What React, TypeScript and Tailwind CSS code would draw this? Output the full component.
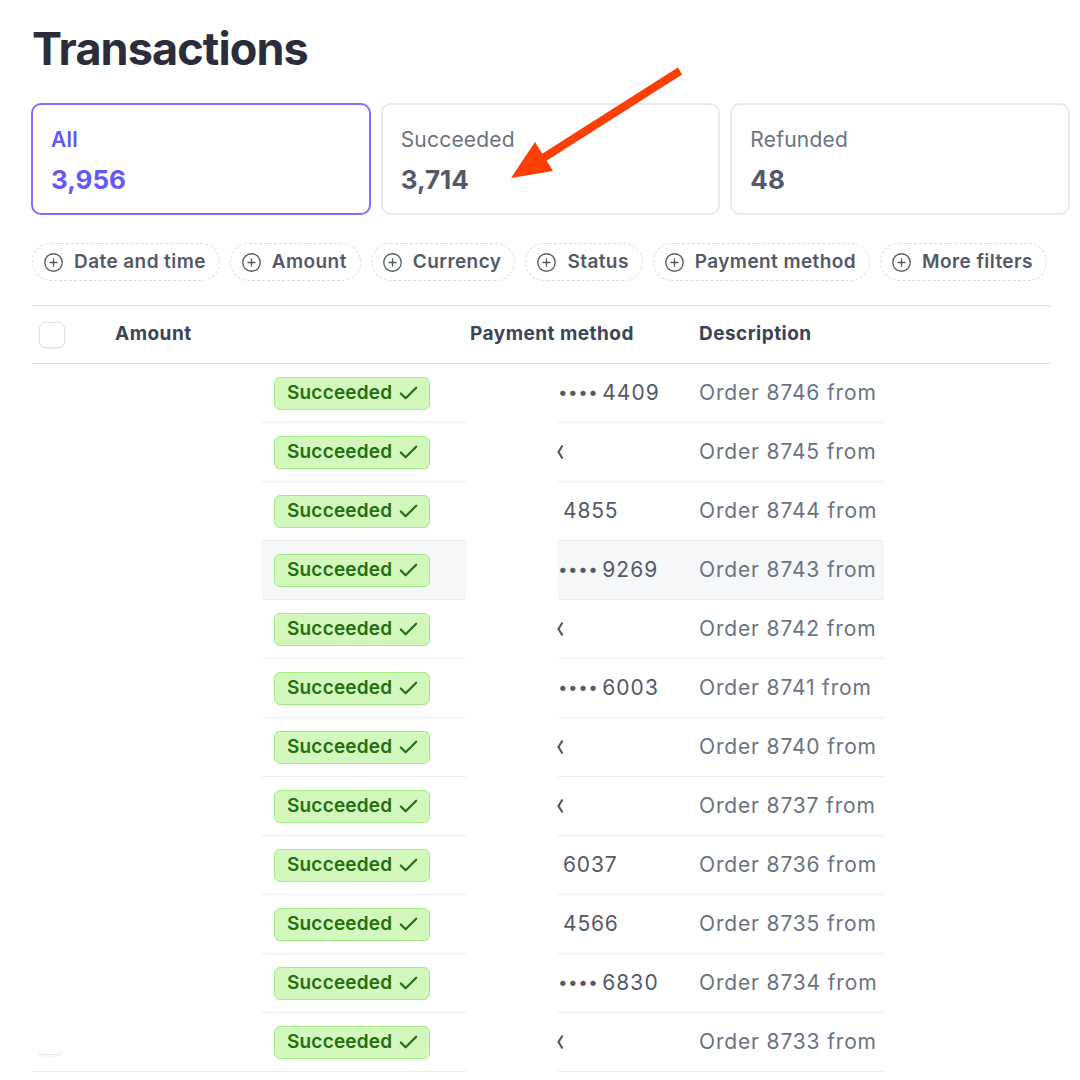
import { CirclePlus, Check } from "lucide-react";

const filters = ["Date and time", "Amount", "Currency", "Status", "Payment method", "More filters"];

// kind: dots = "•••• 1234", num = last four only, cut = glyph clipped by the mask
const rows = [
  { order: "8746", kind: "dots", last4: "4409" },
  { order: "8745", kind: "cut", last4: "" },
  { order: "8744", kind: "num", last4: "4855" },
  { order: "8743", kind: "dots", last4: "9269", hover: true },
  { order: "8742", kind: "cut", last4: "" },
  { order: "8741", kind: "dots", last4: "6003" },
  { order: "8740", kind: "cut", last4: "" },
  { order: "8737", kind: "cut", last4: "" },
  { order: "8736", kind: "num", last4: "6037" },
  { order: "8735", kind: "num", last4: "4566" },
  { order: "8734", kind: "dots", last4: "6830" },
  { order: "8733", kind: "cut", last4: "", last: true },
];

function Card({ label, value, active }: { label: string; value: string; active?: boolean }) {
  return (
    <div
      className={
        active
          ? "h-[112px] rounded-[10px] border-2 border-[#7d72f7] bg-white pl-[18px] pt-[23px]"
          : "h-[112px] rounded-[10px] border-2 border-[#e6ebf1] bg-white pl-[18px] pt-[23px]"
      }
    >
      <div
        className={
          active
            ? "text-[21px] leading-[24px] tracking-[0.01em] font-semibold text-[#6457f9]"
            : "text-[21px] leading-[24px] tracking-[0.01em] text-[#6a7383]"
        }
      >
        {label}
      </div>
      <div
        className={
          active
            ? "mt-[13px] text-[26px] leading-[30px] font-bold text-[#6457f9]"
            : "mt-[13px] text-[26px] leading-[30px] font-bold text-[#545969]"
        }
      >
        {value}
      </div>
    </div>
  );
}

function PaymentCell({ kind, last4 }: { kind: string; last4: string }) {
  if (kind === "cut") {
    return (
      <svg width="7" height="16" viewBox="0 0 7 16" className="-ml-[1px]">
        <path d="M5.5 1.5 L1.5 8 L5.5 14.5" fill="none" stroke="#545969" strokeWidth="2.2" />
      </svg>
    );
  }
  if (kind === "num") {
    return <span className="ml-[5px] text-[21px] tracking-[0.04em] text-[#545969]">{last4}</span>;
  }
  return (
    <span className="flex items-center whitespace-nowrap text-[#545969]">
      <span className="text-[17px] tracking-[0.5px]">••••</span>
      <span className="ml-[4px] text-[21px] tracking-[0.05em]">{last4}</span>
    </span>
  );
}

function Arrow() {
  return (
    <svg className="absolute left-0 top-0 pointer-events-none" width="1080" height="260" viewBox="0 0 1080 260">
      <line x1="680" y1="71" x2="540" y2="160" stroke="#fb3f05" strokeWidth="8" />
      <polygon points="511,178 535,142 553,171" fill="#fb3f05" />
    </svg>
  );
}

export default function App() {
  return (
    <div className="relative w-[1080px] h-[1080px] overflow-hidden bg-white font-['Inter',sans-serif]">
      <h1 className="pl-[32px] pt-[26px] text-[45px] leading-none font-bold tracking-[-0.02em] text-[#2b2d3a]">
        Transactions
      </h1>

      <div className="mt-[32px] ml-[31px] mr-[10px] grid grid-cols-3 gap-[10px]">
        <Card label="All" value="3,956" active />
        <Card label="Succeeded" value="3,714" />
        <Card label="Refunded" value="48" />
      </div>

      <div className="mt-[28px] ml-[32px] flex gap-[10px]">
        {filters.map((f) => (
          <div
            key={f}
            className="flex h-[38px] items-center gap-[10px] rounded-full border border-dashed border-[#d5dbe1] pl-[10px] pr-[13px] text-[19px] tracking-[0.022em] font-semibold text-[#545969]"
          >
            <CirclePlus size={21} strokeWidth={1.5} />
            {f}
          </div>
        ))}
      </div>

      <div className="mt-[24px] ml-[32px] w-[1020px]">
        {/* header */}
        <div className="flex h-[59px] items-center border-y border-[#dde3ea] text-[19px] tracking-[0.025em] font-bold text-[#3c4257]">
          <div className="w-[83px] pl-[7px]">
            <div className="h-[26px] w-[26px] rounded-[7px] border border-[#dbe0e6] bg-white shadow-[0_1px_2px_rgba(0,0,0,0.08)]" />
          </div>
          <div className="w-[355px]">Amount</div>
          <div className="w-[229px]">Payment method</div>
          <div>Description</div>
        </div>

        {/* rows, partly masked */}
        {rows.map((r) => (
          <div key={r.order} className="flex h-[59px]">
            {r.last ? (
              <div className="flex w-[230px] items-end border-b border-[#ebeef1] pb-[16px] pl-[6px]">
                <div className="h-[5px] w-[24px] rounded-b-[7px] border-b border-[#e3e8ee] shadow-[0_2px_2px_rgba(0,0,0,0.04)]" />
              </div>
            ) : (
              <div className="w-[230px]" />
            )}
            <div
              className={
                r.hover
                  ? "flex w-[204px] items-center border-b border-[#ebeef1] bg-[#f5f7f9] pl-[12px]"
                  : "flex w-[204px] items-center border-b border-[#ebeef1] pl-[12px]"
              }
            >
              <div className="flex h-[33px] items-center gap-[5px] rounded-[6px] border border-[#a6ec84] bg-[#d3f8bd] pl-[12px] pr-[9px] text-[19px] tracking-[0.01em] font-semibold text-[#236f0e]">
                Succeeded
                <Check size={23} strokeWidth={2.3} />
              </div>
            </div>
            <div className="w-[92px]" />
            <div
              className={
                r.hover
                  ? "flex w-[326px] items-center border-b border-[#ebeef1] bg-[#f5f7f9]"
                  : "flex w-[326px] items-center border-b border-[#ebeef1]"
              }
            >
              <div className="flex w-[141px] items-center">
                <PaymentCell kind={r.kind} last4={r.last4} />
              </div>
              <div className="whitespace-nowrap text-[21px] tracking-[0.04em] text-[#6a7383]">
                Order {r.order} from
              </div>
            </div>
          </div>
        ))}
      </div>

      <Arrow />
    </div>
  );
}
